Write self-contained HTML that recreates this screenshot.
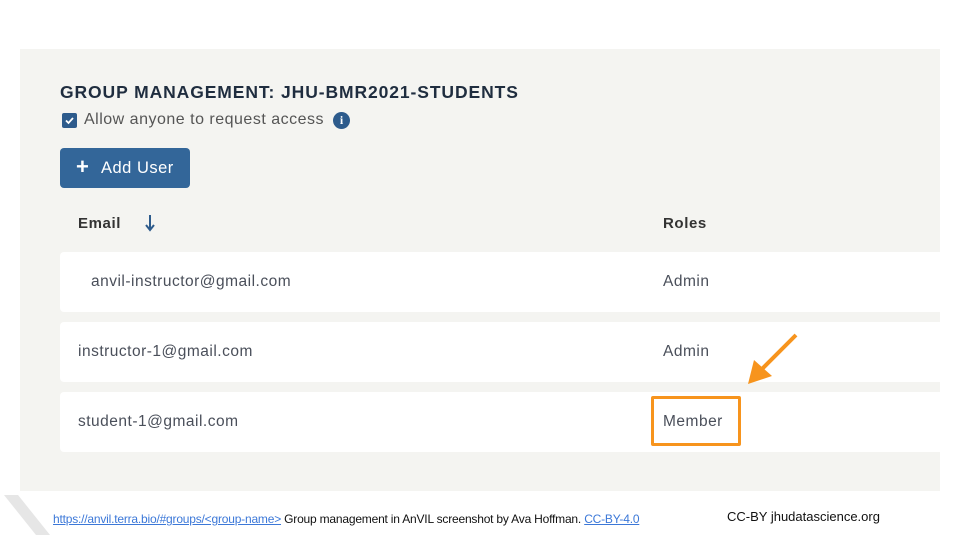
<!DOCTYPE html>
<html><head><style>
body{margin:0;width:960px;height:540px;background:#fff;position:relative;overflow:hidden;font-family:"Liberation Sans",sans-serif}
.panel{position:absolute;left:20px;top:49px;width:920px;height:442px;background:#f4f4f1}
.t{position:absolute;white-space:nowrap}
.row{position:absolute;left:60px;width:880px;height:60px;background:#fff;border-radius:4px 0 0 4px}
.cell{position:absolute;top:21px;font-size:15.5px;color:#4a4f5a;letter-spacing:0.5px}
</style></head><body>
<div class="panel"></div>
<div class="t" style="left:60px;top:82px;font-size:17.5px;font-weight:bold;color:#1f2d3f;letter-spacing:0.9px">GROUP MANAGEMENT: JHU-BMR2021-STUDENTS</div>
<div style="position:absolute;left:62px;top:113px;width:15px;height:15px;background:#2d5b8c;border-radius:2px"><svg width="15" height="15"><path d="M4 7.5l2.5 2.5 4.5-5" stroke="#fff" stroke-width="1.8" fill="none"/></svg></div>
<div class="t" style="left:84px;top:111px;font-size:16px;color:#555;letter-spacing:0.5px">Allow anyone to request access</div>
<div style="position:absolute;left:333px;top:112px;width:17px;height:17px;border-radius:50%;background:#2d5b8c;color:#fff;font-size:12px;font-weight:bold;text-align:center;line-height:17px;font-family:'Liberation Serif',serif">i</div>
<div style="position:absolute;left:60px;top:148px;width:130px;height:40px;background:#336699;border-radius:4px;color:#fff;font-size:16.5px;line-height:40px;letter-spacing:0.5px"><span style="position:absolute;left:16px;font-size:22px;font-weight:bold;top:-1px">+</span><span style="position:absolute;left:41px">Add User</span></div>
<div class="t" style="left:78px;top:215px;font-size:15px;font-weight:bold;color:#333;letter-spacing:0.6px">Email</div>
<svg style="position:absolute;left:144px;top:214px" width="12" height="18"><path d="M6 1v14M2 11l4 5 4-5" stroke="#2d5b8c" stroke-width="2" fill="none"/></svg>
<div class="t" style="left:663px;top:215px;font-size:15px;font-weight:bold;color:#333;letter-spacing:0.6px">Roles</div>
<div class="row" style="top:252px"><div class="cell" style="left:31px">anvil-instructor@gmail.com</div><div class="cell" style="left:603px">Admin</div></div>
<div class="row" style="top:322px"><div class="cell" style="left:18px">instructor-1@gmail.com</div><div class="cell" style="left:603px">Admin</div></div>
<div class="row" style="top:392px"><div class="cell" style="left:18px">student-1@gmail.com</div><div class="cell" style="left:603px">Member</div></div>
<div style="position:absolute;left:651px;top:396px;width:84px;height:44px;border:3px solid #f7941d;border-radius:2px"></div>
<svg style="position:absolute;left:740px;top:330px" width="62" height="60"><path d="M56 5L20 41" stroke="#f7941d" stroke-width="4" fill="none"/><path d="M8 54L14 30L32 46Z" fill="#f7941d"/></svg>
<svg style="position:absolute;left:0;top:495px" width="52" height="45"><path d="M4 0h14l32 40H36z" fill="#e6e6e6"/></svg>
<div class="t" style="left:53px;top:512px;font-size:12px;color:#111;letter-spacing:-0.2px"><span style="color:#3c78d8;text-decoration:underline">https://anvil.terra.bio/#groups/&lt;group-name&gt;</span> Group management in AnVIL screenshot by Ava Hoffman. <span style="color:#3c78d8;text-decoration:underline">CC-BY-4.0</span></div>
<div class="t" style="left:727px;top:509px;font-size:13px;color:#111">CC-BY jhudatascience.org</div>
</body></html>
